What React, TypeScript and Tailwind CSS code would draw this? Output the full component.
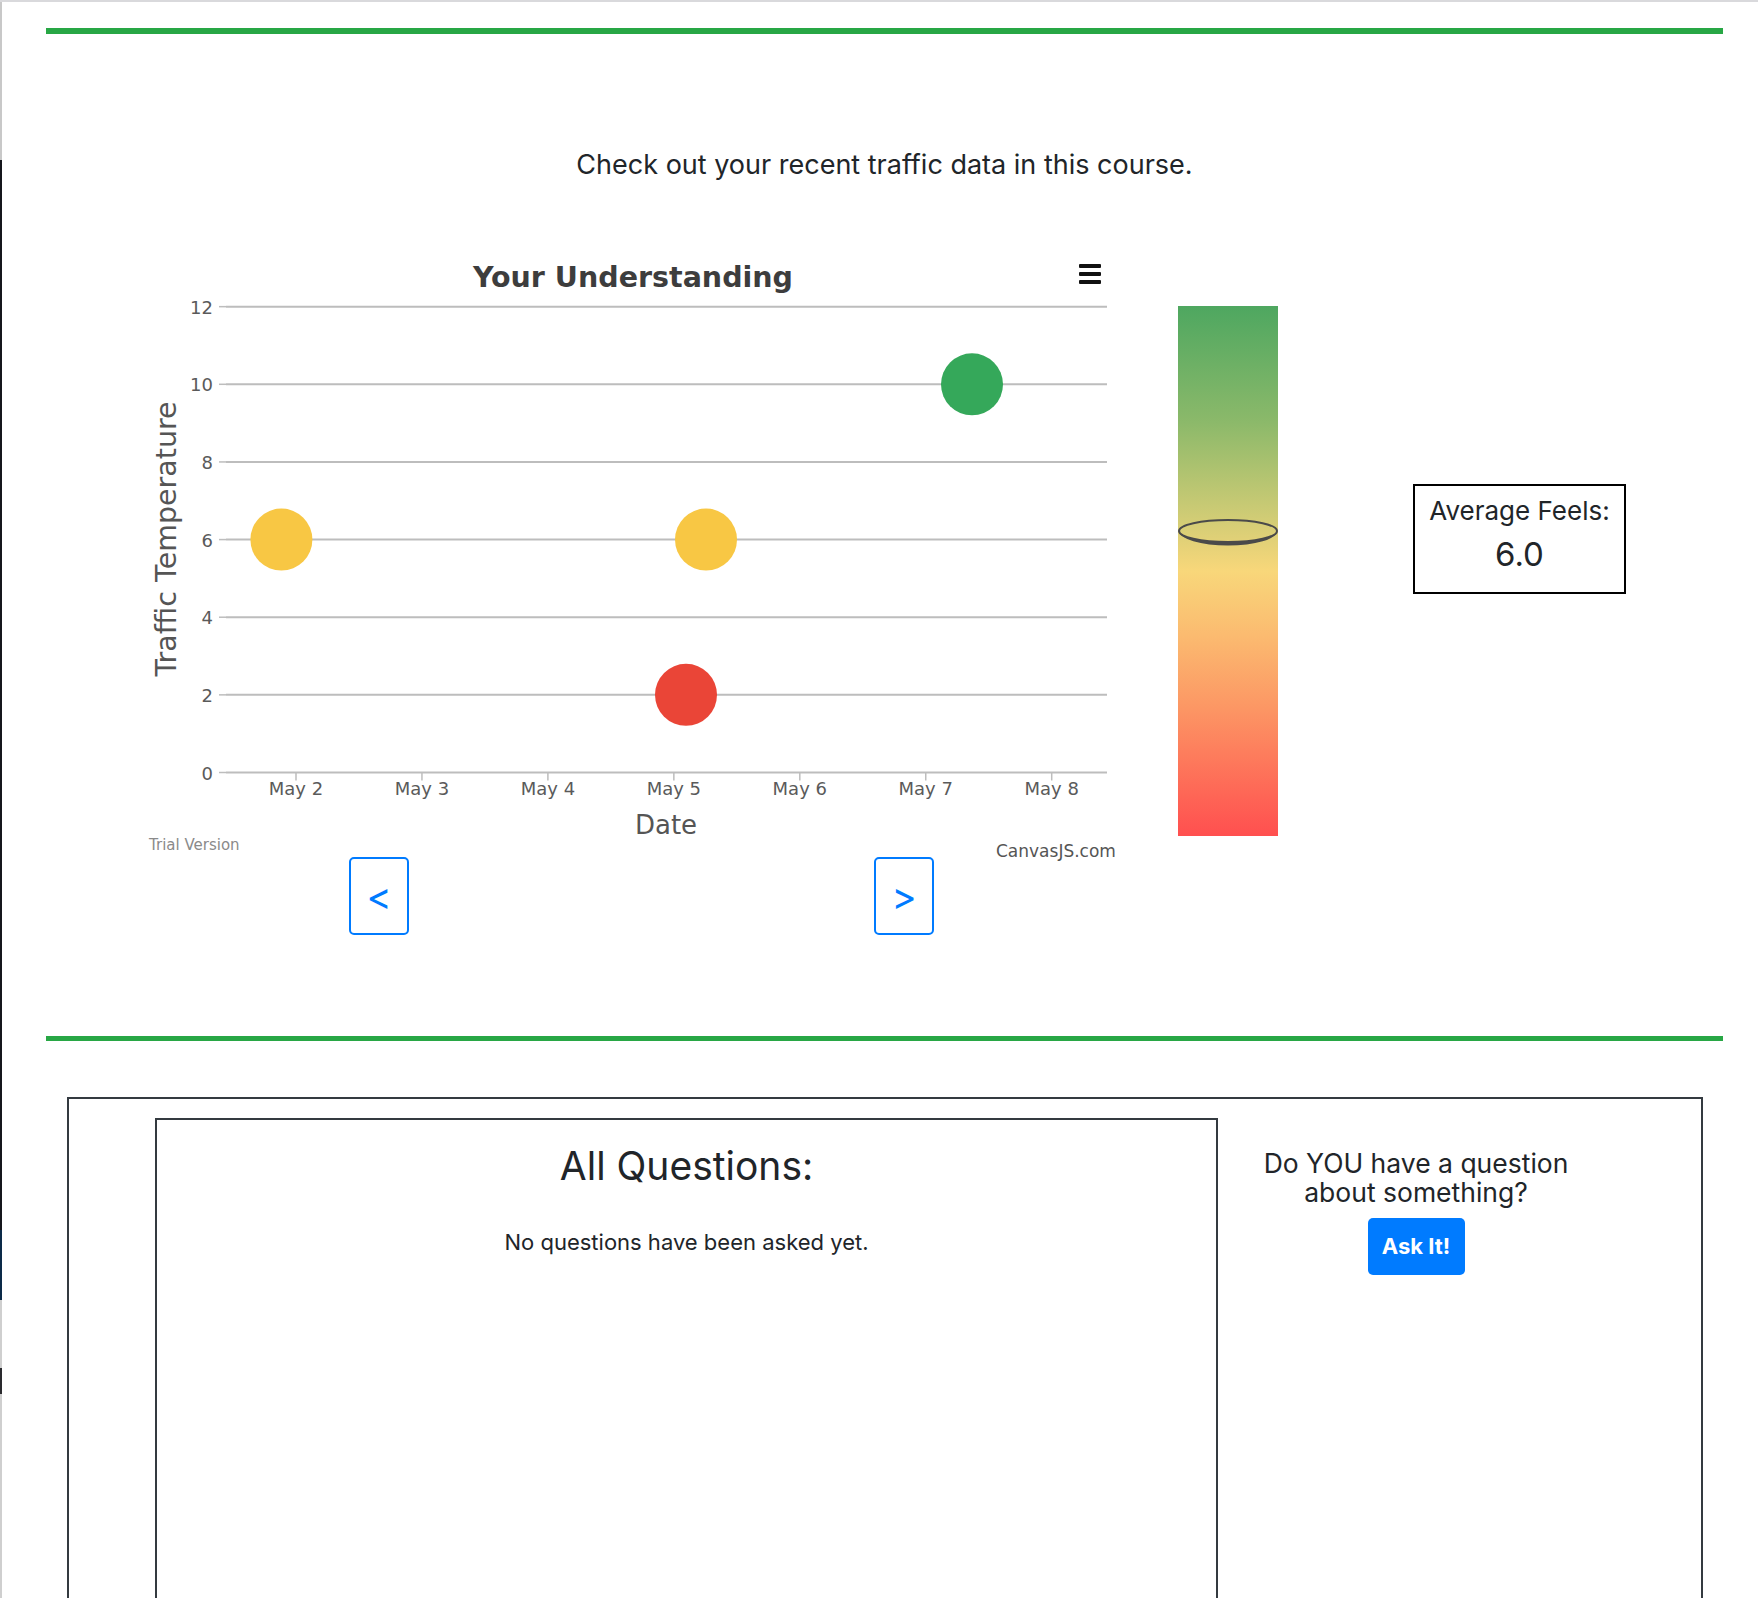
import React from "react";

const gridValues = [12, 10, 8, 6, 4, 2, 0];
const dates = ["May 2", "May 3", "May 4", "May 5", "May 6", "May 7", "May 8"];

// chart coords are local to the svg (origin at page 140,237)
const yZero = 535.5;
const yUnit = 38.82;
const yFor = (v: number) => yZero - v * yUnit;

const points = [
  { x: 141.4, v: 6, color: "#f8c744" },
  { x: 566, v: 6, color: "#f8c744" },
  { x: 546, v: 2, color: "#ea4537" },
  { x: 832, v: 10, color: "#35a85a" },
];

const UnderstandingChart = () => (
  <svg width={980} height={620} overflow="visible" fontFamily="'DejaVu Sans', Lato, sans-serif">
    <text x={493} y={50} textAnchor="middle" fontSize={28.5} fontWeight={700} fill="#3d3d3d">
      Your Understanding
    </text>

    {/* menu button */}
    <rect x={939} y={27} width={22} height={4} rx={1} fill="#111" />
    <rect x={939} y={35} width={22} height={4} rx={1} fill="#111" />
    <rect x={939} y={43} width={22} height={4} rx={1} fill="#111" />

    {gridValues.map((v) => (
      <g key={v}>
        <line x1={86} x2={967} y1={yFor(v)} y2={yFor(v)} stroke="#bdbdbd" strokeWidth={2} />
        <line x1={79} x2={86} y1={yFor(v)} y2={yFor(v)} stroke="#bdbdbd" strokeWidth={1.5} />
        <text x={73} y={yFor(v) + 7} textAnchor="end" fontSize={18} fill="#5a5a5a">
          {v}
        </text>
      </g>
    ))}

    {dates.map((d, i) => {
      const x = 156 + i * 125.95;
      return (
        <g key={d}>
          <line x1={x} x2={x} y1={yZero} y2={yZero + 8} stroke="#bdbdbd" strokeWidth={1.5} />
          <text x={x} y={558} textAnchor="middle" fontSize={18} fill="#5a5a5a">
            {d}
          </text>
        </g>
      );
    })}

    <text x={526} y={597} textAnchor="middle" fontSize={26} fill="#555">
      Date
    </text>
    <text
      x={0}
      y={0}
      transform="translate(36 302) rotate(-90)"
      textAnchor="middle"
      fontSize={28.5}
      fill="#555"
    >
      Traffic Temperature
    </text>

    {points.map((p, i) => (
      <circle key={i} cx={p.x} cy={yFor(p.v)} r={31} fill={p.color} />
    ))}

    <text x={9} y={613} fontSize={15} fill="#8a8a8a">
      Trial Version
    </text>
    <text x={856} y={620} fontSize={17} fill="#555">
      CanvasJS.com
    </text>
  </svg>
);

const FeelsBar = () => (
  <div className="relative mt-[69px] ml-[58px] w-[100px] h-[530px] bg-[linear-gradient(to_bottom,#4ea760_0%,#8cb96a_22%,#c9ca74_38%,#f8d77a_50%,#fbbb70_62%,#fc9664_76%,#ff4f4f_100%)]">
    {/* average marker */}
    <svg className="absolute left-0 top-[212px]" width={100} height={30}>
      <ellipse cx={50} cy={13} rx={49} ry={11} fill="none" stroke="#4a4a4a" strokeWidth={2} />
      <path d="M1 13 A49 11 0 0 0 99 13 A49 14.5 0 0 1 1 13 Z" fill="#4a4a4a" />
    </svg>
  </div>
);

const NavButton = ({ label }: { label: string }) => (
  <button className="w-[60px] h-[78px] rounded-[5px] border-2 border-[#007bff] text-[#007bff] text-[38px] leading-none flex items-center justify-center">
    {label}
  </button>
);

export default function App() {
  return (
    <div className="h-[1598px] w-full overflow-hidden bg-white border-t-2 border-[#d9d9dc] flex font-['Inter',sans-serif] text-[#212529]">
      {/* window edge */}
      <div className="w-[2px] shrink-0 flex flex-col">
        <div className="h-[158px] bg-[#c8c8c8]" />
        <div className="h-[1070px] bg-[#15171c]" />
        <div className="h-[70px] bg-[#0c2a48]" />
        <div className="h-[68px] bg-[#cfcfcf]" />
        <div className="h-[26px] bg-[#2a2a2e]" />
        <div className="flex-1 bg-[#cfcfcf]" />
      </div>

      <div className="flex-1 ml-[44px] mr-[35px] flex flex-col">
        <hr className="mt-[26px] w-full border-0 border-t-[6px] border-solid border-t-[#28a745]" />

        <p className="mt-[115px] text-center text-[27px] leading-[32px]">
          Check out your recent traffic data in this course.
        </p>

        <div className="mt-[56px] pl-[94px] flex items-start">
          <div className="flex flex-col w-[980px]">
            <UnderstandingChart />
            <div className="flex pl-[209px] gap-[465px]">
              <NavButton label="<" />
              <NavButton label=">" />
            </div>
          </div>

          <FeelsBar />

          <div className="mt-[247px] ml-[135px] w-[213px] h-[110px] border-2 border-black flex flex-col items-center pt-[8px]">
            <span className="text-[26px] leading-[34px]">Average Feels:</span>
            <span className="text-[33px] leading-[40px] mt-[6px]">6.0</span>
          </div>
        </div>

        <hr className="mt-[101px] w-full border-0 border-t-[5px] border-solid border-t-[#28a745]" />

        <div className="mt-[56px] ml-[21px] mr-[20px] border-2 border-[#343a40] pt-[19px] pl-[86px] flex">
          <div className="w-[1063px] h-[600px] border-2 border-[#343a40] flex flex-col items-center pt-[21px]">
            <h2 className="text-[39px] leading-[50px]">All Questions:</h2>
            <p className="mt-[36px] text-[22px] leading-[30px]">No questions have been asked yet.</p>
          </div>

          <div className="w-[396px] flex flex-col items-center pt-[31px]">
            <p className="text-center text-[26.5px] leading-[29px]">
              Do YOU have a question
              <br />
              about something?
            </p>
            <button className="mt-[11px] w-[97px] h-[57px] rounded-[5px] bg-[#007bff] text-white font-bold text-[22px]">
              Ask It!
            </button>
          </div>
        </div>
      </div>
    </div>
  );
}
